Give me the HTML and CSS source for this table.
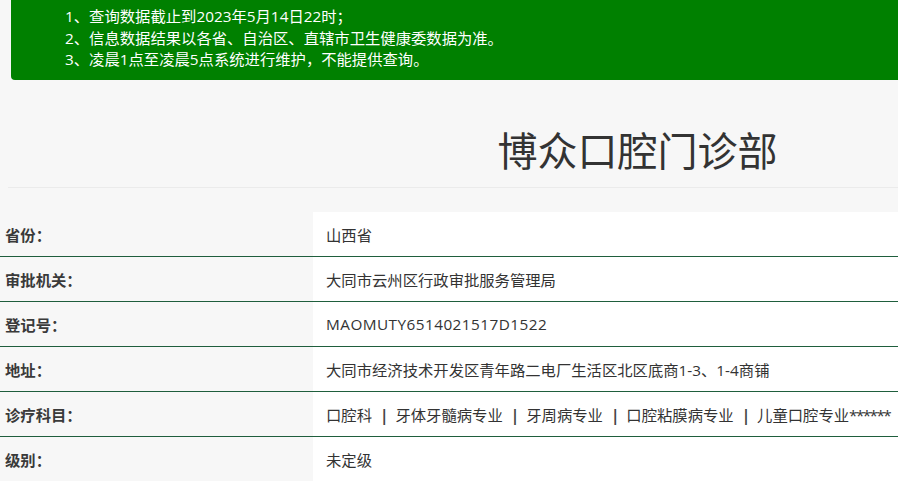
FILE: index.html
```html
<!DOCTYPE html>
<html lang="zh-CN">
<head>
<meta charset="utf-8">
<title>博众口腔门诊部</title>
<link rel="stylesheet" href="styles.css">
</head>
<body>
<div class="page">
  <div class="notice">
    <p>1、查询数据截止到2023年5月14日22时；</p>
    <p>2、信息数据结果以各省、自治区、直辖市卫生健康委数据为准。</p>
    <p>3、凌晨1点至凌晨5点系统进行维护，不能提供查询。</p>
  </div>
  <div class="title-wrap">
    <h1 class="title">博众口腔门诊部</h1>
  </div>
  <table class="info">
    <tr><th>省份：</th><td>山西省</td></tr>
    <tr><th>审批机关：</th><td>大同市云州区行政审批服务管理局</td></tr>
    <tr><th>登记号：</th><td><span class="code">MAOMUTY6514021517D1522</span></td></tr>
    <tr><th>地址：</th><td>大同市经济技术开发区青年路二电厂生活区北区底商1-3、1-4商铺</td></tr>
    <tr><th>诊疗科目：</th><td>口腔科<b class="sep">|</b>牙体牙髓病专业<b class="sep">|</b>牙周病专业<b class="sep">|</b>口腔粘膜病专业<b class="sep">|</b>儿童口腔专业<span class="stars">******</span></td></tr>
    <tr><th>级别：</th><td>未定级</td></tr>
  </table>
</div>
</body>
</html>
```
FILE: styles.css
```css
html, body {
  margin: 0;
  padding: 0;
  background: #f7f7f7;
  overflow: hidden;
}
body {
  font-family: "Open Sans", "Noto Sans CJK SC", sans-serif;
  font-size: 15.33px;
  color: #333;
}
.page {
  width: 1275px;
}
.notice {
  margin-left: 11px;
  background: #008000;
  color: #fff;
  border-bottom-left-radius: 4px;
  padding: 6px 0 9px 54px;
  line-height: 21.5px;
}
.notice p {
  margin: 0;
}
.title-wrap {
  margin: 0 8px;
  padding: 47px 0 16px;
  border-bottom: 1px solid #ebebeb;
  text-align: center;
}
.title {
  margin: 0;
  font-family: "Noto Sans CJK SC", sans-serif;
  font-size: 40px;
  font-weight: normal;
  line-height: 44px;
  color: #333;
}
.info {
  margin-top: 24px;
  width: 100%;
  border-collapse: collapse;
}
.info tr {
  border-bottom: 1px solid #1f5e3d;
}
.info th, .info td {
  height: 44px;
  padding: 0;
  text-align: left;
  vertical-align: middle;
  white-space: nowrap;
}
.info th {
  width: 308px;
  padding-left: 5px;
  background: #f7f7f7;
  font-weight: bold;
  color: #3a3a3a;
}
.info td {
  padding-left: 13px;
  background: #fff;
  color: #333;
}
.code {
  letter-spacing: 0.45px;
}
.sep {
  display: inline-block;
  margin: 0 7px 0 8px;
  font-weight: bold;
  color: #444;
}
.stars {
  letter-spacing: -1.6px;
}
```
